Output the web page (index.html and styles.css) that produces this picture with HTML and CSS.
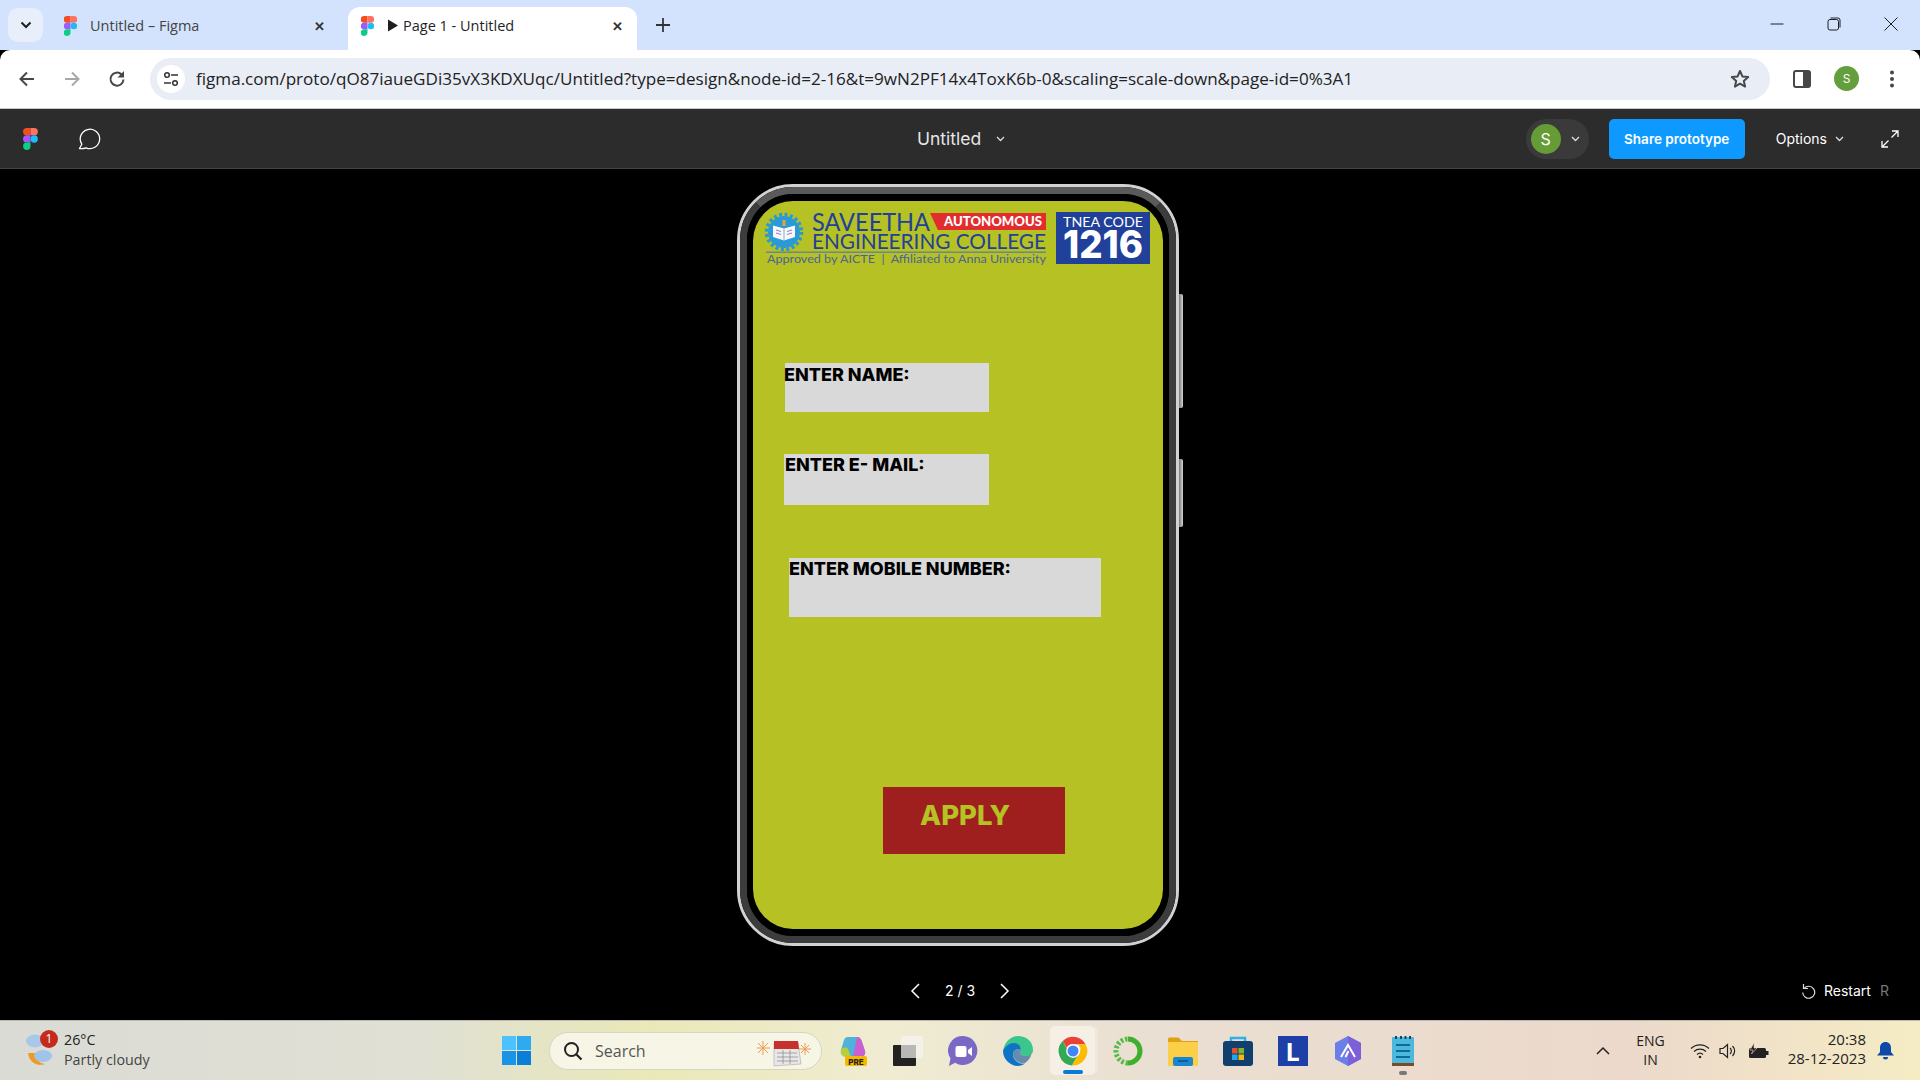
FILE: index.html
```html
<!DOCTYPE html>
<html lang="en">
<head>
    <meta charset="UTF-8">
    <title>Page 1 - Untitled</title>
    <link rel="stylesheet" href="styles.css">
</head>
<body>
<div class="window">

    <!-- chrome tab strip -->
    <div class="tabstrip">
        <div class="tab-switch">
            <svg width="12" height="8" viewBox="0 0 12 8"><path d="M1.5 1.5 6 6l4.5-4.5" fill="none" stroke="#1f1f1f" stroke-width="2"/></svg>
        </div>
        <div class="tab">
            <svg class="favicon" width="15" height="22" viewBox="0 0 15 22"><path d="M3.7 0H7.5V7.3H3.7a3.65 3.65 0 0 1 0-7.3z" fill="#f24e1e"/><path d="M7.5 0h3.7a3.65 3.65 0 0 1 0 7.3H7.5z" fill="#ff7262"/><path d="M3.7 7.3H7.5v7.3H3.7a3.65 3.65 0 0 1 0-7.3z" fill="#a259ff"/><circle cx="11.2" cy="11" r="3.65" fill="#1abcfe"/><path d="M3.7 14.6H7.5v3.7a3.7 3.7 0 1 1-3.8-3.7z" fill="#0acf83"/></svg>
            <span class="tab-title">Untitled – Figma</span>
            <span class="tab-close">✕</span>
        </div>
        <div class="tab tab-active">
            <svg class="favicon" width="15" height="22" viewBox="0 0 15 22"><path d="M3.7 0H7.5V7.3H3.7a3.65 3.65 0 0 1 0-7.3z" fill="#f24e1e"/><path d="M7.5 0h3.7a3.65 3.65 0 0 1 0 7.3H7.5z" fill="#ff7262"/><path d="M3.7 7.3H7.5v7.3H3.7a3.65 3.65 0 0 1 0-7.3z" fill="#a259ff"/><circle cx="11.2" cy="11" r="3.65" fill="#1abcfe"/><path d="M3.7 14.6H7.5v3.7a3.7 3.7 0 1 1-3.8-3.7z" fill="#0acf83"/></svg>
            <svg class="tab-play" width="12" height="13" viewBox="0 0 12 13"><path d="M1 .5 11 6.5 1 12.5z" fill="#1f1f1f"/></svg>
            <span class="tab-title">Page 1 - Untitled</span>
            <span class="tab-close">✕</span>
        </div>
        <svg class="tab-new" width="14" height="14" viewBox="0 0 14 14"><path d="M7 0v14M0 7h14" stroke="#333" stroke-width="1.8"/></svg>
        <div class="window-controls">
            <svg width="14" height="14" viewBox="0 0 14 14"><path d="M.5 7h13" stroke="#1f1f1f"/></svg>
            <svg width="14" height="14" viewBox="0 0 14 14"><rect x="1" y="2.5" width="10.5" height="10.5" rx="2" fill="none" stroke="#1f1f1f"/><path d="M3.5 1H11a2 2 0 0 1 2 2v7.5" fill="none" stroke="#1f1f1f"/></svg>
            <svg width="14" height="14" viewBox="0 0 14 14"><path d="M.5.5l13 13M13.5.5l-13 13" stroke="#1f1f1f"/></svg>
        </div>
    </div>

    <!-- address bar row -->
    <div class="toolbar">
        <svg class="nav-btn" width="18" height="18" viewBox="0 0 18 18"><path d="M16 9H3M9 2.5 2.5 9 9 15.5" fill="none" stroke="#474747" stroke-width="2"/></svg>
        <svg class="nav-btn" width="18" height="18" viewBox="0 0 18 18"><path d="M2 9h13M9 2.5 15.5 9 9 15.5" fill="none" stroke="#a8a8a8" stroke-width="2"/></svg>
        <svg class="nav-btn" width="18" height="18" viewBox="0 0 18 18"><path d="M15.5 9.5a6.5 6.5 0 1 1-1.900-5L15.5 6.5" fill="none" stroke="#474747" stroke-width="2"/><path d="M16 1v6.500H9.500z" fill="#474747"/></svg>
        <div class="omnibox">
            <div class="site-chip">
                <svg width="16" height="16" viewBox="0 0 16 16"><circle cx="4" cy="4" r="2.3" fill="none" stroke="#333" stroke-width="1.5"/><path d="M8 4h7M1 12h7" stroke="#333" stroke-width="1.5"/><circle cx="12" cy="12" r="2.3" fill="none" stroke="#333" stroke-width="1.5"/></svg>
            </div>
            <span class="url">figma.com/proto/qO87iaueGDi35vX3KDXUqc/Untitled?type=design&amp;node-id=2-16&amp;t=9wN2PF14x4ToxK6b-0&amp;scaling=scale-down&amp;page-id=0%3A1</span>
            <svg class="star" width="20" height="20" viewBox="0 0 20 20"><path d="M10 2l2.4 5.4 5.800.6-4.400 3.900 1.300 5.700L10 14.700l-5.100 2.900 1.300-5.700L1.800 8l5.800-.6z" fill="none" stroke="#474747" stroke-width="2" stroke-linejoin="round"/></svg>
        </div>
        <div class="toolbar-right">
            <svg width="18" height="18" viewBox="0 0 18 18"><rect x="1" y="1" width="16" height="16" rx="2" fill="#fff" stroke="#474747" stroke-width="2"/><rect x="10" y="1" width="7" height="16" fill="#474747"/></svg>
            <div class="chrome-avatar">S</div>
            <svg class="chrome-menu" width="6" height="18" viewBox="0 0 6 18"><circle cx="3" cy="2.5" r="2" fill="#474747"/><circle cx="3" cy="9" r="2" fill="#474747"/><circle cx="3" cy="15.5" r="2" fill="#474747"/></svg>
        </div>
    </div>

    <!-- figma prototype bar -->
    <div class="figbar">
        <div class="figbar-left">
            <svg width="15" height="22" viewBox="0 0 15 22"><path d="M3.7 0H7.5V7.3H3.7a3.65 3.65 0 0 1 0-7.3z" fill="#f24e1e"/><path d="M7.5 0h3.7a3.65 3.65 0 0 1 0 7.3H7.5z" fill="#ff7262"/><path d="M3.7 7.3H7.5v7.3H3.7a3.65 3.65 0 0 1 0-7.3z" fill="#a259ff"/><circle cx="11.2" cy="11" r="3.65" fill="#1abcfe"/><path d="M3.7 14.6H7.5v3.7a3.7 3.7 0 1 1-3.8-3.7z" fill="#0acf83"/></svg>
            <svg class="comment" width="23" height="22" viewBox="0 0 23 22"><path d="M1.5 20.5 3.8 16.2A9.7 9.7 0 1 1 8 19.8c-2 .8-4.5 1-6.5.7z" fill="none" stroke="#fff" stroke-width="1.3" stroke-linejoin="round"/></svg>
        </div>
        <div class="file-name">Untitled <svg width="9" height="6" viewBox="0 0 9 6"><path d="M1 1l3.5 3.5L8 1" fill="none" stroke="#ddd" stroke-width="1.3"/></svg></div>
        <div class="figbar-right">
            <div class="user-pill">
                <div class="fig-avatar">S</div>
                <svg width="9" height="6" viewBox="0 0 9 6"><path d="M1 1l3.5 3.5L8 1" fill="none" stroke="#ddd" stroke-width="1.3"/></svg>
            </div>
            <div class="share-btn">Share prototype</div>
            <div class="options">Options <svg width="9" height="6" viewBox="0 0 9 6"><path d="M1 1l3.5 3.5L8 1" fill="none" stroke="#ddd" stroke-width="1.3"/></svg></div>
            <svg class="expand" width="18" height="18" viewBox="0 0 18 18"><path d="M11 1h6v6M17 1l-6.5 6.5M7 17H1v-6M1 17l6.5-6.5" fill="none" stroke="#fff" stroke-width="1.3"/></svg>
        </div>
    </div>

    <!-- prototype canvas -->
    <div class="canvas">
        <div class="phone">
            <span class="side-btn side-btn-a"></span>
            <span class="side-btn side-btn-b"></span>
            <div class="bezel">
                <div class="glass">
                    <div class="screen">
                        <svg class="college-logo" width="390" height="58" viewBox="763 210 390 58">
                            <circle cx="784" cy="232" r="16" fill="#2a9ad6"/>
                            <circle cx="784" cy="232" r="17.5" fill="none" stroke="#2a9ad6" stroke-width="3.5" stroke-dasharray="3 2.5"/>
                            <path d="M773 225.5l11 3 11-3V237l-11 3.5-11-3.500z" fill="#f4f8fb"/>
                            <path d="M784 228.5v12" stroke="#7f93c2" stroke-width=".8"/>
                            <path d="M776 230l5 1.5M776 233l5 1.5M787 231.5l5-1.5M787 234.5l5-1.5" stroke="#a472b8" stroke-width="1"/>
                            <rect x="782.5" y="220" width="3" height="6" fill="#e0a33a"/>
                            <text class="logo-name" x="812" y="231" textLength="118" lengthAdjust="spacingAndGlyphs">SAVEETHA</text>
                            <path d="M930 213H1046V230H938z" fill="#e32c2e"/>
                            <text class="logo-auto" x="944" y="226" textLength="98" lengthAdjust="spacingAndGlyphs">AUTONOMOUS</text>
                            <text class="logo-college" x="812" y="249" textLength="234" lengthAdjust="spacingAndGlyphs">ENGINEERING COLLEGE</text>
                            <rect x="766" y="251.5" width="280" height="1.5" fill="#6d8790"/>
                            <text class="logo-approved" x="767" y="263" textLength="279" lengthAdjust="spacingAndGlyphs">Approved by AICTE  |  Affiliated to Anna University</text>
                            <rect x="1056" y="212" width="94" height="52" fill="#21409a"/>
                            <text class="logo-tnea" x="1063" y="227" textLength="80" lengthAdjust="spacingAndGlyphs">TNEA CODE</text>
                            <text class="logo-code" x="1063" y="258" textLength="80" lengthAdjust="spacingAndGlyphs">1216</text>
                        </svg>
                        <div class="field field-name">ENTER NAME:</div>
                        <div class="field field-mail">ENTER E- MAIL:</div>
                        <div class="field field-mobile">ENTER MOBILE NUMBER:</div>
                        <div class="apply-btn">APPLY</div>
                    </div>
                </div>
            </div>
        </div>
        <div class="pager">
            <svg width="10" height="16" viewBox="0 0 10 16"><path d="M9 1 2 8l7 7" fill="none" stroke="#fff" stroke-width="1.5"/></svg>
            <span class="pager-text">2 / 3</span>
            <svg width="10" height="16" viewBox="0 0 10 16"><path d="M1 1l7 7-7 7" fill="none" stroke="#fff" stroke-width="1.5"/></svg>
        </div>
        <div class="restart">
            <svg width="15" height="16" viewBox="0 0 15 16"><path d="M3 5.500a6 6 0 1 1-1.300 4M2.500 1v4.500H7" fill="none" stroke="#ddd" stroke-width="1.2"/></svg>
            <span>Restart</span>
            <span class="restart-key">R</span>
        </div>
    </div>

    <!-- windows taskbar -->
    <div class="taskbar">
        <div class="weather">
            <svg class="weather-icon" width="34" height="38" viewBox="0 0 34 38"><ellipse cx="11" cy="9" rx="9" ry="6.5" fill="#a8c8ea"/><path d="M4 21c1 9 9 14 17 11-6-1-10-5-10-11z" fill="#ef9a22"/><ellipse cx="19" cy="24" rx="9" ry="6" fill="#9fc3ea"/></svg>
            <span class="weather-badge">1</span>
            <div class="weather-text">
                <div class="weather-temp">26°C</div>
                <div class="weather-desc">Partly cloudy</div>
            </div>
        </div>
        <svg class="win-logo" width="29" height="29" viewBox="0 0 29 29"><rect width="14" height="14" fill="#4cc2ff"/><rect x="15" width="14" height="14" fill="#2eaaf0"/><rect y="15" width="14" height="14" fill="#1a94e6"/><rect x="15" y="15" width="14" height="14" fill="#0a7fd8"/></svg>
        <div class="search-box">
            <svg width="20" height="20" viewBox="0 0 20 20"><circle cx="8.5" cy="8.5" r="6.5" fill="none" stroke="#222" stroke-width="2"/><path d="M13 13l5.5 5.5" stroke="#222" stroke-width="2.2"/></svg>
            <span class="search-label">Search</span>
            <svg class="search-art" width="54" height="32" viewBox="0 0 54 32"><g stroke="#ee9a55" stroke-width="1"><path d="M6 6v14M-1 13h14M1 8l10 10M11 8 1 18"/><path d="M48 8v12M42 14h12M44 10l8 8M52 10l-8 8"/></g><path d="M17 8h24l3 21-27 2z" fill="#e9e6e6" stroke="#999" stroke-width=".5"/><path d="M17 6h24l1 8H17z" fill="#c7302c"/><path d="M20 18h20M20 22h21M20 26h21M26 15v14M33 15v14" stroke="#888" stroke-width=".7"/></svg>
        </div>
        <div class="task-icons">
            <div class="task-icon">
                <svg width="30" height="30" viewBox="0 0 30 30"><path d="M10 1h9c3 0 4 2 5 5l3 9c1 4-2 6-5 6H9c-4 0-7-3-6-7l3-10c.6-2 2-3 4-3z" fill="#4fb3d9"/><path d="M19 1c3 0 4 2 5 5l3 9c1 4-2 6-5 6h-7z" fill="#c95fd0"/><path d="M3 14c2-3 5-3 7-1l3 8H9c-4 0-7-3-6-7z" fill="#b6cf3a"/><rect x="7" y="20" width="22" height="10" rx="2" fill="#f5b800"/><text class="pre-text" x="18" y="28.5" text-anchor="middle">PRE</text></svg>
            </div>
            <div class="task-icon">
                <svg width="30" height="30" viewBox="0 0 30 30"><rect y="9" width="23" height="21" rx="1" fill="#222"/><rect x="8" y="0" width="22" height="22" rx="1" fill="#f4f2ee" opacity=".8"/><rect x="8" y="9" width="15" height="13" fill="#b8b8b6"/></svg>
            </div>
            <div class="task-icon">
                <svg width="30" height="30" viewBox="0 0 30 30"><path d="M15 0a14.5 14.5 0 1 1-8 26.7L1 30l1.5-7.5A14.5 14.5 0 0 1 15 0z" fill="#7b68c4"/><rect x="7.5" y="10" width="11" height="11" rx="2" fill="#fff"/><path d="M20 14l4-3v9l-4-3z" fill="#fff"/></svg>
            </div>
            <div class="task-icon">
                <svg width="30" height="30" viewBox="0 0 30 30"><path d="M15 0c8 0 15 5 15 14 0 4-3 6-7 6-3 0-6-1-6-3 0-1 1-1.5 1-3.5 0-3-3-6-7-6-6 0-10 5-11 8C1 7 7 0 15 0z" fill="#3ac68c"/><path d="M0 15c1-3 5-8 11-8 4 0 7 3 7 6.5-3-1.500-8 0-8 5 0 5 5 10 12 9-2 1.500-4.500 2.500-7 2.500C7 30 0 23 0 15z" fill="#0f74c4"/><path d="M10 18.500c0-5 5-6.500 8-5 0 2-1 2.500-1 3.500 0 2 3 3 6 3 2 0 4-.5 5.500-2-1 4-3.500 7-6.500 9-7 1-12-4-12-9z" fill="#0b4f96" opacity=".6"/></svg>
            </div>
            <div class="task-icon task-icon-active">
                <svg width="30" height="30" viewBox="0 0 24 24"><path d="M12 .5A11.500 11.500 0 0 1 22 6.500H12a5.500 5.500 0 0 0-5 3L3.800 4A11.500 11.500 0 0 1 12 .5z" fill="#ea4335"/><path d="M22 6.500A11.500 11.500 0 0 1 11 23.500l5-8.500a5.500 5.500 0 0 0 0-8.500z" fill="#fbbc04"/><path d="M3.800 4 8 12a5.500 5.500 0 0 0 8 3l-5 8.500A11.500 11.500 0 0 1 3.800 4z" fill="#34a853"/><circle cx="12" cy="12" r="5.5" fill="#fff"/><circle cx="12" cy="12" r="4.4" fill="#4285f4"/></svg>
                <span class="active-bar"></span>
            </div>
            <div class="task-icon">
                <svg width="30" height="30" viewBox="0 0 30 30"><path d="M15 3a12 12 0 0 1 0 24" fill="none" stroke="#3fb02e" stroke-width="5"/><path d="M15 27A12 12 0 0 1 15 3" fill="none" stroke="#59b94a" stroke-width="5" stroke-dasharray="2.5 1.8"/></svg>
            </div>
            <div class="task-icon">
                <svg width="30" height="30" viewBox="0 0 30 30"><path d="M0 3a1.5 1.5 0 0 1 1.5-1.5h9L14 5h16v4H0z" fill="#e0a00f"/><path d="M0 6h30v23a1 1 0 0 1-1 1H1a1 1 0 0 1-1-1z" fill="#fbcf47"/><rect x="5" y="21" width="20" height="9" rx="2" fill="#1a86cf"/><path d="M10 25h10" stroke="#0c4f86" stroke-width="1.5"/></svg>
            </div>
            <div class="task-icon">
                <svg width="30" height="30" viewBox="0 0 30 30"><path d="M8 6V2h14v4" fill="none" stroke="#2ab3ea" stroke-width="2.5"/><rect y="5" width="30" height="25" rx="3" fill="#123f6d"/><rect x="9" y="12" width="5.5" height="5.5" fill="#e8502a"/><rect x="15.5" y="12" width="5.5" height="5.5" fill="#7db82b"/><rect x="9" y="18.5" width="5.5" height="5.5" fill="#1ea8e8"/><rect x="15.5" y="18.5" width="5.5" height="5.5" fill="#fbb80f"/></svg>
            </div>
            <div class="task-icon">
                <div class="l-tile">L</div>
            </div>
            <div class="task-icon">
                <svg width="30" height="30" viewBox="0 0 30 30"><path d="M15 0l13 7v16l-13 7-13-7V7z" fill="#6b7fe8"/><path d="M15 0l13 7v16l-13 7z" fill="#7d5fd8"/><path d="M8 21l7-12 7 12M12.5 21 15.5 15" fill="none" stroke="#fff" stroke-width="2"/></svg>
            </div>
            <div class="task-icon">
                <svg width="22" height="33" viewBox="0 0 22 33"><rect y="3" width="22" height="27" rx="1" fill="#4cb8dd"/><rect y="29" width="22" height="3" fill="#7c4a23"/><path d="M4 2v3M9 2v3M13.5 2v3M18 2v3" stroke="#134a63" stroke-width="2"/><path d="M4 11h14M4 17h14M4 23h14" stroke="#0f6a94" stroke-width="2"/></svg>
                <span class="open-dot"></span>
            </div>
        </div>
        <div class="tray">
            <svg width="14" height="9" viewBox="0 0 14 9"><path d="M1 8l6-6 6 6" fill="none" stroke="#222" stroke-width="1.5"/></svg>
            <div class="lang">ENG<br>IN</div>
            <div class="tray-icons">
                <svg width="20" height="16" viewBox="0 0 20 16"><path d="M1 5.5a13 13 0 0 1 18 0M4 8.5a9 9 0 0 1 12 0M7 11.5a4.5 4.5 0 0 1 6 0" fill="none" stroke="#222" stroke-width="1.2"/><circle cx="10" cy="14" r="1.3" fill="#222"/></svg>
                <svg width="20" height="16" viewBox="0 0 20 16"><path d="M1 5.5h3L8.5 1.500v13L4 10.500H1z" fill="none" stroke="#222" stroke-width="1.2"/><path d="M11 5a4 4 0 0 1 0 6M13.500 3a7 7 0 0 1 0 10" fill="none" stroke="#222" stroke-width="1.2"/></svg>
                <svg width="21" height="16" viewBox="0 0 21 16"><rect x="1" y="5" width="17" height="10" rx="1.5" fill="#222"/><rect x="18" y="8" width="2.5" height="4" fill="#222"/><path d="M6 0 2 7h3L3.500 11 9 5H6z" fill="#222" stroke="#ecd9cb" stroke-width=".6"/></svg>
            </div>
            <div class="clock">20:38<br>28-12-2023</div>
            <svg class="bell" width="17" height="18" viewBox="0 0 17 18"><path d="M8.5 0C5 0 3 2.5 3 6v4l-3 3.5h17L14 10V6c0-3.5-2-6-5.500-6z" fill="#0f4aa8"/><path d="M6 15h5a2.500 2.500 0 0 1-5 0z" fill="#0f4aa8"/></svg>
        </div>
    </div>
</div>
</body>
</html>
```

FILE: styles.css
```css
* {
    box-sizing: border-box;
}
html, body {
    margin: 0;
    padding: 0;
    width: 1920px;
    height: 1080px;
    overflow: hidden;
    background: #000;
}
.window {
    width: 1920px;
    height: 1080px;
    display: flex;
    flex-direction: column;
    font-family: "Open Sans", sans-serif;
}

/* tab strip */
.tabstrip {
    height: 50px;
    background: #d3e3fd;
    display: flex;
    align-items: flex-end;
    position: relative;
    padding-left: 8px;
}
.tab-switch {
    width: 35px;
    height: 34px;
    margin-bottom: 8px;
    background: #e8effb;
    border-radius: 10px;
    display: flex;
    align-items: center;
    justify-content: center;
}
.tab {
    width: 289px;
    height: 43px;
    margin-left: 7px;
    padding-left: 13px;
    padding-right: 14px;
    display: flex;
    align-items: center;
    border-radius: 12px 12px 0 0;
    font-size: 14.5px;
    color: #444;
}
.tab-active {
    margin-left: 9px;
    padding-left: 12px;
    background: #fff;
    color: #1f1f1f;
}
.tab .favicon {
    transform: scale(0.9);
    margin-top: -6px;
}
.tab-title {
    margin-left: 12px;
    margin-top: -6px;
    flex: 1;
}
.tab-play {
    margin-left: 12px;
    margin-right: -8px;
    margin-top: -6px;
}
.tab-close {
    font-size: 13px;
    font-weight: 700;
    color: #333;
    margin-top: -6px;
}
.tab-new {
    margin-left: 19px;
    margin-bottom: 18px;
}
.window-controls {
    margin-left: auto;
    display: flex;
    gap: 43px;
    margin-right: 22px;
    margin-bottom: 19px;
}

/* toolbar */
.toolbar {
    height: 59px;
    background: #fff;
    border-radius: 10px 10px 0 0;
    border-bottom: 1px solid #c8c8c8;
    display: flex;
    align-items: center;
    padding-left: 18px;
    padding-bottom: 1px;
}
.nav-btn {
    margin-right: 27px;
}
.omnibox {
    width: 1620px;
    height: 42px;
    margin-left: -3px;
    background: #e9edf6;
    border-radius: 21px;
    display: flex;
    align-items: center;
    padding-left: 7px;
}
.site-chip {
    width: 28px;
    height: 28px;
    border-radius: 50%;
    background: #fff;
    display: flex;
    align-items: center;
    justify-content: center;
}
.url {
    margin-left: 11px;
    font-size: 17.08px;
    color: #222;
    white-space: nowrap;
}
.star {
    margin-left: auto;
    margin-right: 20px;
}
.toolbar-right {
    display: flex;
    align-items: center;
    margin-left: 23px;
    gap: 23px;
}
.chrome-avatar {
    width: 25px;
    height: 25px;
    border-radius: 50%;
    background: #659e3c;
    color: #fff;
    font-size: 12px;
    text-align: center;
    line-height: 25px;
    font-family: Inter, sans-serif;
}
.chrome-menu {
    margin-left: 7px;
}

/* figma bar */
.figbar {
    height: 60px;
    background: #2c2c2c;
    border-bottom: 1px solid #444;
    display: flex;
    align-items: center;
    position: relative;
    padding: 0 21px 0 23px;
    font-family: Inter, sans-serif;
    color: #fff;
}
.figbar-left {
    display: flex;
    align-items: center;
    gap: 40px;
}
.file-name {
    position: absolute;
    left: 917px;
    top: 0;
    height: 59px;
    display: flex;
    align-items: center;
    gap: 15px;
    font-size: 17.5px;
    color: #e6e6e6;
}
.figbar-right {
    margin-left: auto;
    display: flex;
    align-items: center;
}
.user-pill {
    width: 63px;
    height: 40px;
    border-radius: 20px;
    background: #3a3a3a;
    display: flex;
    align-items: center;
    gap: 10px;
    padding-left: 5px;
}
.fig-avatar {
    width: 30px;
    height: 30px;
    border-radius: 50%;
    background: #659c35;
    font-size: 16px;
    line-height: 30px;
    text-align: center;
}
.share-btn {
    width: 136px;
    height: 40px;
    margin-left: 20px;
    background: #0d99ff;
    border-radius: 5px;
    font-size: 13.5px;
    font-weight: 600;
    line-height: 40px;
    text-align: center;
}
.options {
    margin-left: 31px;
    display: flex;
    align-items: center;
    gap: 8px;
    font-size: 14px;
}
.expand {
    margin-left: 37px;
}

/* canvas */
.canvas {
    flex: 1;
    background: #000;
    position: relative;
    display: flex;
    flex-direction: column;
    align-items: center;
    padding-top: 15px;
}
.phone {
    width: 442px;
    height: 762px;
    margin-right: 4px;
    position: relative;
    border: 3px solid #d2d2d2;
    border-radius: 56px;
}
.side-btn {
    position: absolute;
    right: -7px;
    width: 4px;
    background: linear-gradient(90deg, #777, #d6d6d6);
    border-radius: 0 2px 2px 0;
}
.side-btn-a {
    top: 107px;
    height: 114px;
}
.side-btn-b {
    top: 272px;
    height: 68px;
}
.bezel {
    height: 100%;
    border: 7px solid #3c3c3c;
    border-top-color: #5a5a5a;
    border-radius: 53px;
    background: #000;
}
.glass {
    height: 100%;
    padding: 1px 0;
    border: 6px solid #000;
    border-radius: 46px;
    background: #000;
}
.screen {
    height: 728px;
    background: #b6c123;
    border-radius: 40px;
    overflow: hidden;
    padding-top: 9px;
}
.college-logo {
    display: block;
    margin-left: 10px;
    font-family: Lato, sans-serif;
}
.logo-name {
    font-size: 25px;
    fill: #21409a;
}
.logo-college {
    font-size: 21px;
    fill: #21409a;
}
.logo-auto {
    font-size: 12.5px;
    font-weight: 900;
    fill: #fff;
}
.logo-approved {
    font-size: 10.5px;
    fill: #4a6596;
    white-space: pre;
}
.logo-tnea {
    font-size: 12.5px;
    fill: #fff;
}
.logo-code {
    font-size: 38px;
    font-weight: 800;
    fill: #fff;
    font-family: Inter, sans-serif;
}
.field {
    background: #d9d9d9;
    font-family: Inter, sans-serif;
    font-size: 18px;
    font-weight: 800;
    line-height: 22px;
    color: #000;
}
.field-name {
    width: 204px;
    height: 49px;
    margin-left: 32px;
    margin-top: 95px;
    padding-top: 1px;
    text-indent: -1px;
}
.field-mail {
    width: 205px;
    height: 51px;
    margin-left: 31px;
    margin-top: 42px;
    text-indent: 1px;
}
.field-mobile {
    width: 312px;
    height: 59px;
    margin-left: 36px;
    margin-top: 53px;
}
.apply-btn {
    width: 182px;
    height: 67px;
    margin-left: 130px;
    margin-top: 170px;
    padding-left: 37px;
    padding-top: 11px;
    background: #9f1f1f;
    color: #b6c123;
    font-family: Inter, sans-serif;
    font-size: 27.5px;
    font-weight: 800;
    line-height: 34px;
}
.pager {
    margin-top: 36px;
    display: flex;
    align-items: center;
    gap: 25px;
    color: #fff;
    font-family: Inter, sans-serif;
    font-size: 14px;
}
.restart {
    position: absolute;
    left: 1801px;
    top: 813px;
    display: flex;
    align-items: center;
    gap: 8px;
    color: #fff;
    font-family: Inter, sans-serif;
    font-size: 14px;
}
.restart-key {
    color: #777;
    margin-left: 1px;
}

/* taskbar */
.taskbar {
    height: 60px;
    border-top: 1px solid #bdbab2;
    background: linear-gradient(90deg, #dbdbd6 0%, #e0e0d4 22%, #e9e9b8 34%, #f0ecd2 46%, #e9dfd2 60%, #ecd9cb 85%, #f5ecc4 100%);
    display: flex;
    align-items: center;
    position: relative;
}
.weather {
    width: 502px;
    display: flex;
    align-items: center;
    position: relative;
    padding-left: 24px;
}
.weather-badge {
    position: absolute;
    left: 40px;
    top: -2px;
    width: 18px;
    height: 18px;
    border-radius: 50%;
    background: #c42b1c;
    color: #fff;
    font-size: 12px;
    line-height: 18px;
    text-align: center;
}
.weather-text {
    margin-left: 6px;
    margin-top: -2px;
    font-size: 14.3px;
    line-height: 20px;
    color: #222;
}
.weather-desc {
    color: #444;
}
.search-box {
    width: 273px;
    height: 38px;
    margin-left: 18px;
    border-radius: 19px;
    background: #f7f5e5;
    border: 1px solid #d8d6c2;
    display: flex;
    align-items: center;
    padding-left: 13px;
    position: relative;
}
.search-label {
    margin-left: 12px;
    font-size: 16px;
    color: #555;
}
.search-art {
    margin-left: auto;
    margin-right: 10px;
}
.task-icons {
    display: flex;
    margin-left: 3px;
}
.task-icon {
    width: 55px;
    height: 59px;
    display: flex;
    align-items: center;
    justify-content: center;
    position: relative;
}
.task-icon-active::before {
    content: "";
    position: absolute;
    left: 5px;
    top: 5px;
    width: 45px;
    height: 49px;
    background: #f6efe6;
    border-radius: 5px;
    box-shadow: 4px 0 0 -1px #f0e8de;
}
.task-icon-active svg {
    position: relative;
}
.active-bar {
    position: absolute;
    left: 18px;
    top: 49px;
    width: 20px;
    height: 4px;
    border-radius: 2px;
    background: #0a7bd5;
}
.open-dot {
    position: absolute;
    left: 24px;
    top: 50px;
    width: 8px;
    height: 4px;
    border-radius: 2px;
    background: #777;
}
.pre-text {
    font-family: Inter, sans-serif;
    font-size: 8px;
    font-weight: 800;
    fill: #222;
}
.l-tile {
    width: 30px;
    height: 30px;
    background: #1f3fa8;
    color: #fff;
    font-family: "Open Sans", sans-serif;
    font-size: 25px;
    font-weight: 700;
    line-height: 30px;
    text-align: center;
}
.tray {
    margin-left: auto;
    display: flex;
    align-items: center;
    color: #222;
    font-size: 14px;
    padding-right: 26px;
}
.lang {
    margin-left: 26px;
    margin-top: -2px;
    text-align: center;
    line-height: 19px;
}
.tray-icons {
    margin-left: 25px;
    display: flex;
    gap: 9px;
    align-items: center;
}
.clock {
    margin-left: 19px;
    margin-top: -3px;
    font-size: 15px;
    text-align: right;
    line-height: 19px;
}
.bell {
    margin-left: 11px;
}
```
